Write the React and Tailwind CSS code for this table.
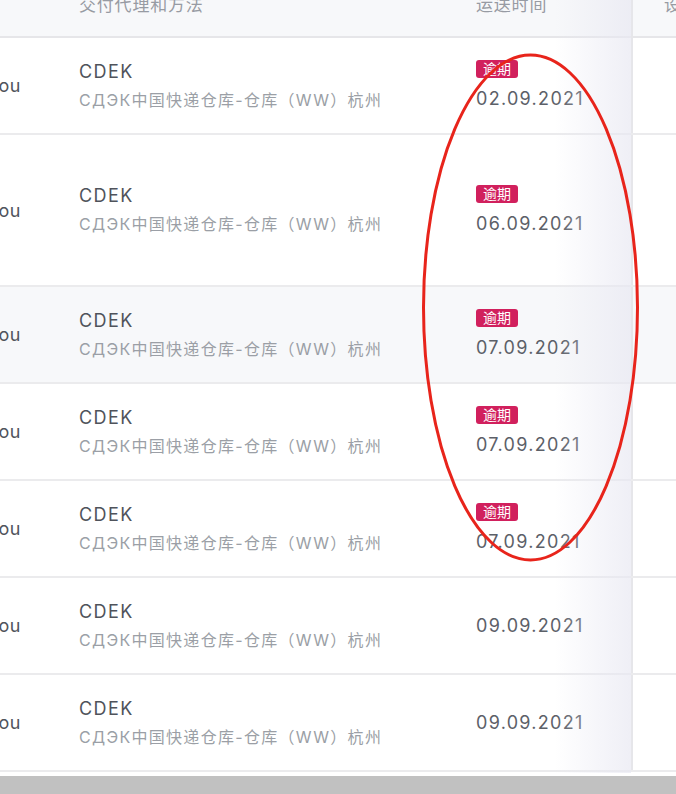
import React from 'react'

const rows = [
  { h: 'h-[97px]', late: true, date: '02.09.2021' },
  { h: 'h-[152px]', late: true, date: '06.09.2021' },
  { h: 'h-[97px]', late: true, date: '07.09.2021', hover: true },
  { h: 'h-[97px]', late: true, date: '07.09.2021' },
  { h: 'h-[97px]', late: true, date: '07.09.2021' },
  { h: 'h-[97px]', late: false, date: '09.09.2021' },
  { h: 'h-[97px]', late: false, date: '09.09.2021' },
]

const Row = ({ row }) => (
  <div
    className={
      'flex items-center border-b-2 border-[#ebebed] ' +
      row.h +
      (row.hover ? ' bg-[#f7f8fa]' : ' bg-white')
    }
  >
    {/* city column, scrolled off to the left */}
    <div className="w-[79px] shrink-0">
      <div className="w-[21px] overflow-hidden flex justify-end whitespace-nowrap text-[18px] tracking-[0.5px] text-[#50545c]">
        Hangzhou
      </div>
    </div>

    {/* carrier */}
    <div className="w-[397px] shrink-0 flex flex-col">
      <span className="text-[18px] leading-[29px] tracking-[1.4px] text-[#4f535b]">CDEK</span>
      <span className="text-[16px] leading-[29px] tracking-[1.3px] text-[#9b9fa6] whitespace-nowrap">
        СДЭК中国快递仓库-仓库（WW）杭州
      </span>
    </div>

    {/* delivery time */}
    <div className="w-[155px] shrink-0 flex flex-col items-start">
      {row.late && (
        <span className="px-[7px] rounded-[3px] bg-[#d1205d] text-white text-[14px] leading-[18px] mb-[9px]">
          逾期
        </span>
      )}
      <span className="text-[18px] leading-[24px] text-[#5c6068] tracking-[1.3px]">
        {row.date}
      </span>
    </div>

    <div className="self-stretch w-[2px] shrink-0 bg-[#e6e6ea]" />
    <div className="flex-1" />
  </div>
)

export default function App() {
  return (
    <div
      className="relative w-[676px] h-[794px] overflow-hidden bg-white"
      style={{ fontFamily: 'Inter, "Noto Sans CJK SC", sans-serif' }}
    >
      <div className="-mt-[24px]">
        {/* header */}
        <div className="flex items-center h-[62px] bg-[#f7f8fa] border-b-2 border-[#e6e6e9] text-[17px] tracking-[0.8px] text-[#979ba3]">
          <div className="w-[79px] shrink-0" />
          <div className="w-[397px] shrink-0">交付代理和方法</div>
          <div className="w-[155px] shrink-0">运送时间</div>
          <div className="self-stretch w-[2px] shrink-0 bg-[#e6e6ea]" />
          <div className="flex-1 pl-[31px] whitespace-nowrap overflow-hidden">设置</div>
        </div>

        {rows.map((row, i) => (
          <Row key={i} row={row} />
        ))}
      </div>

      <div className="h-[4px] bg-white" />
      <div className="h-full bg-[#c1c1c1]" />

      {/* fixed column shadow */}
      <div className="pointer-events-none absolute left-[555px] top-0 w-[76px] h-[773px] bg-gradient-to-r from-transparent to-[#e8e8f2]/70" />

      {/* annotation ellipse */}
      <svg className="pointer-events-none absolute left-0 top-0" width="676" height="794">
        <ellipse cx="530.5" cy="307.5" rx="107" ry="252.5" fill="none" stroke="#e8241b" strokeWidth="3" />
      </svg>
    </div>
  )
}
